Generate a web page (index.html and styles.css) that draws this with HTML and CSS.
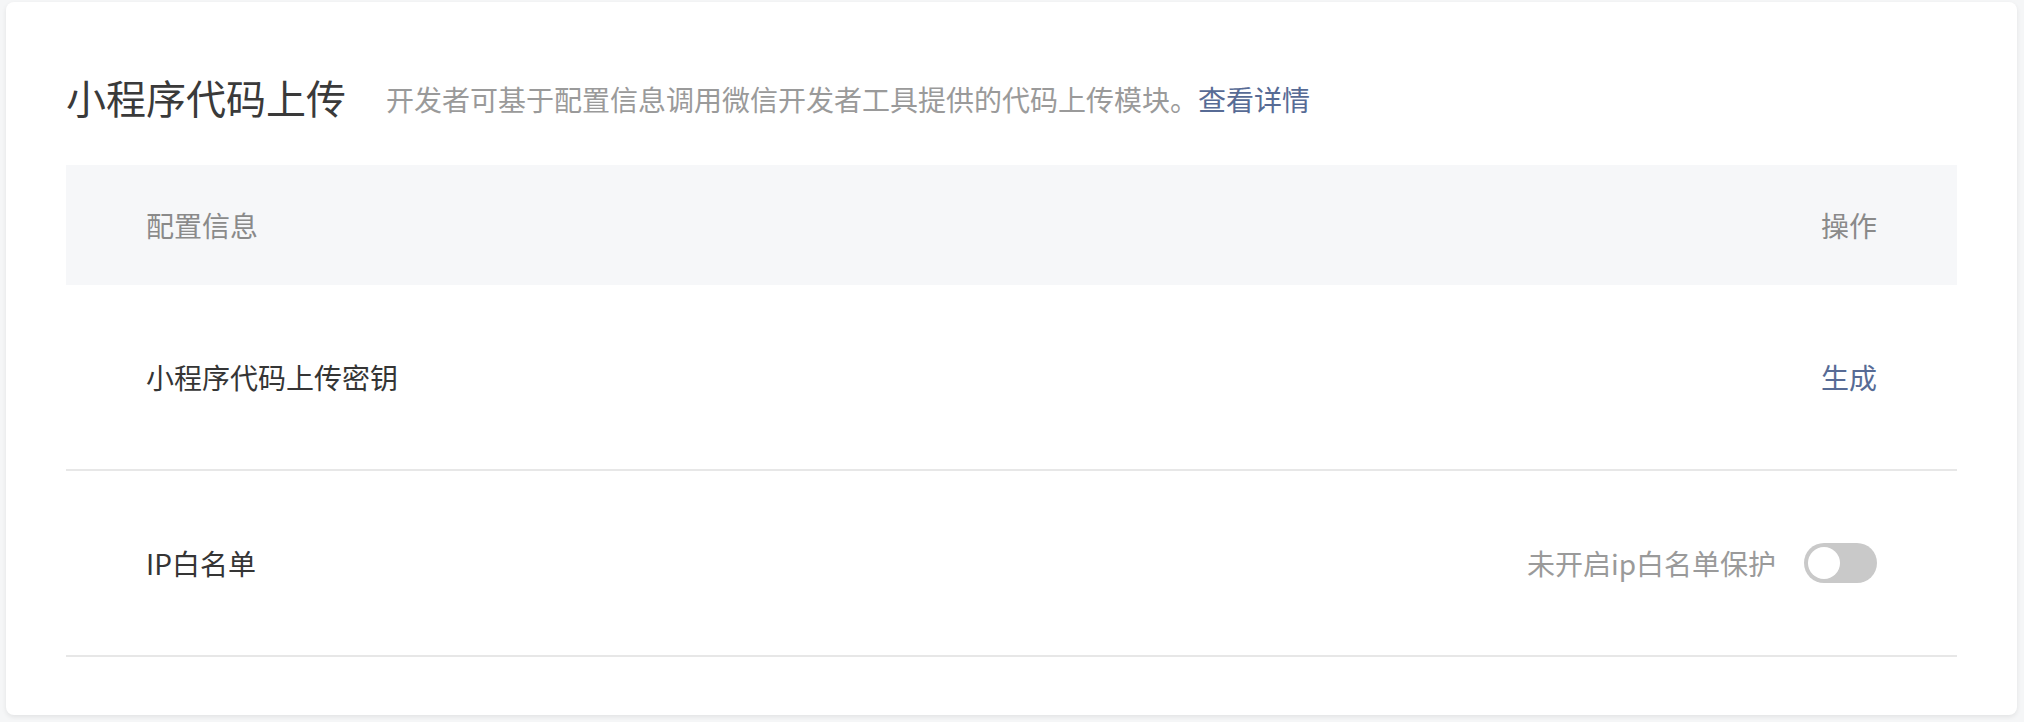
FILE: index.html
```html
<!DOCTYPE html>
<html>
  <head>
    <meta charset="utf-8">
    <link rel="stylesheet" href="styles.css">
  </head>
  <body>
    <div class="card">
      <div class="card-title">
        <h2>小程序代码上传</h2>
        <p class="card-desc">开发者可基于配置信息调用微信开发者工具提供的代码上传模块。<a href="#" class="link">查看详情</a></p>
      </div>
      <div class="table">
        <div class="table-head">
          <div>配置信息</div>
          <div>操作</div>
        </div>
        <div class="table-row">
          <div class="row-label">小程序代码上传密钥</div>
          <div class="row-action"><a href="#" class="link">生成</a></div>
        </div>
        <div class="table-row">
          <div class="row-label">IP白名单</div>
          <div class="row-action">
            <span class="status">未开启ip白名单保护</span>
            <span class="switch"><span class="switch-knob"></span></span>
          </div>
        </div>
      </div>
    </div>
  </body>
</html>
```

FILE: styles.css
```css
* {
  box-sizing: border-box;
}
:root {
  font-family: "Noto Sans CJK SC", "Noto Sans", sans-serif;
}
body {
  margin: 0;
  padding: 2px 7px 5px 6px;
  background-color: #f5f6f7;
  color: #353535;
}
.card {
  background-color: #fff;
  border-radius: 8px;
  box-shadow: 0 2px 5px rgb(0 0 0 / 0.08);
  padding: 59px 60px 58px;
}
.card-title {
  display: flex;
  align-items: center;
  gap: 40px;
  height: 72px;
}
.card-title h2 {
  margin: 0;
  font-size: 40px;
  font-weight: normal;
  line-height: 72px;
  color: #3a3a3a;
}
.card-desc {
  margin: 4px 0 0;
  font-size: 28px;
  line-height: 40px;
  color: #9a9a9a;
}
.link {
  color: #576b95;
  text-decoration: none;
}
.table {
  margin-top: 32px;
}
.table-head {
  display: flex;
  justify-content: space-between;
  align-items: center;
  height: 120px;
  padding: 0 80px;
  background-color: #f6f7f9;
  font-size: 28px;
  color: #8a8a8a;
}
.table-row {
  display: flex;
  justify-content: space-between;
  align-items: center;
  height: 186px;
  padding: 0 80px;
  border-bottom: 2px solid #e7e7e7;
  font-size: 28px;
}
.row-action {
  display: flex;
  align-items: center;
  gap: 28px;
}
.status {
  color: #9a9a9a;
}
.switch {
  position: relative;
  display: block;
  width: 73px;
  height: 40px;
  border-radius: 20px;
  background-color: #c9c9c9;
}
.switch-knob {
  position: absolute;
  top: 4px;
  left: 4px;
  width: 32px;
  height: 32px;
  border-radius: 50%;
  background-color: #fff;
}
```
